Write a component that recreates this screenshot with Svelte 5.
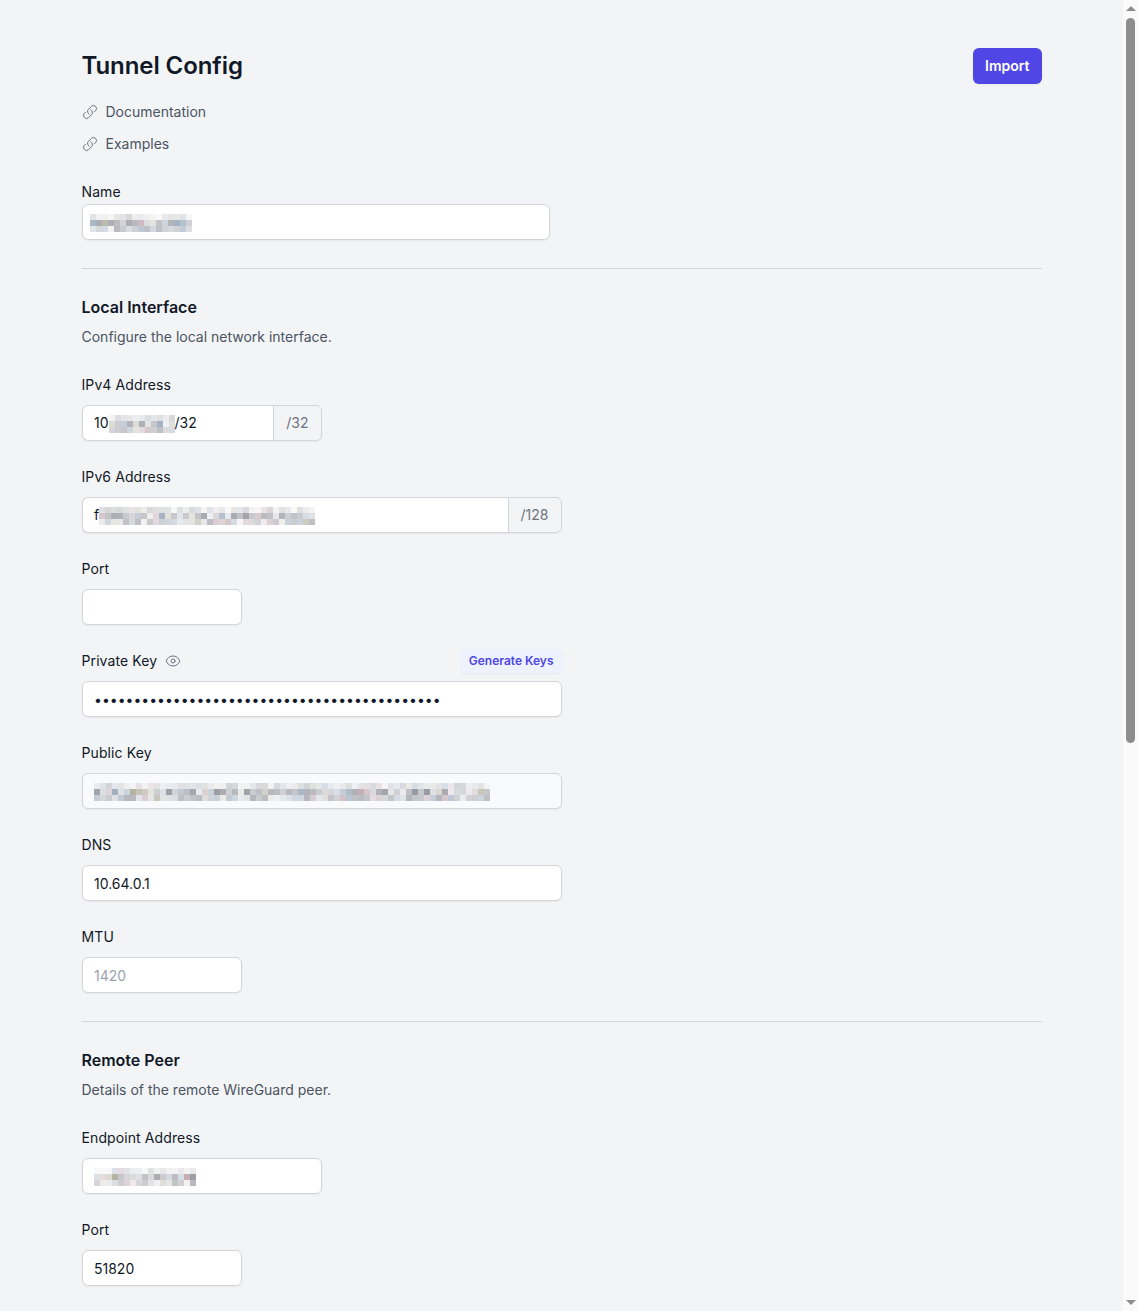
<script lang="ts">
  // redacted values in the reference are pixelated, so draw them as seeded tile grids
  function mosaic(cols: number, seed: number) {
    let s = seed;
    const next = () => {
      s = (s * 9301 + 49297) % 233280;
      return s / 233280;
    };
    const depth = [0.4, 1, 0.7];
    const cells: string[] = [];
    for (let row = 0; row < 3; row++) {
      for (let col = 0; col < cols; col++) {
        const a = (0.12 + next() * 0.58) * depth[row];
        const tint = next();
        const c = tint < 0.2 ? '120,140,165' : tint < 0.3 ? '165,130,140' : tint < 0.4 ? '150,145,120' : '110,112,122';
        cells.push(`rgba(${c},${a.toFixed(2)})`);
      }
    }
    return cells;
  }

  const linkPath =
    'M13.19 8.688a4.5 4.5 0 0 1 1.242 7.244l-4.5 4.5a4.5 4.5 0 0 1-6.364-6.364l1.757-1.757m13.35-.622 1.757-1.757a4.5 4.5 0 0 0-6.364-6.364l-4.5 4.5a4.5 4.5 0 0 0 1.242 7.244';
  const links = ['Documentation', 'Examples'];
  const privateKey = '•'.repeat(44);
</script>

{#snippet blur(cols: number, seed: number, cls = '')}
  <span class={`mosaic ${cls}`} style={`grid-template-columns: repeat(${cols}, 6px)`} aria-hidden="true">
    {#each mosaic(cols, seed) as color}
      <i style={`background: ${color}`}></i>
    {/each}
  </span>
{/snippet}

<div class="window">
  <main class="page">
    <header class="page__header">
      <h1>Tunnel Config</h1>
      <button class="btn-primary" type="button">Import</button>
    </header>

    <ul class="links">
      {#each links as link}
        <li>
          <svg viewBox="0 0 24 24" aria-hidden="true"><path d={linkPath} /></svg>
          <span>{link}</span>
        </li>
      {/each}
    </ul>

    <div class="field field--name">
      <label for="name">Name</label>
      <div id="name" class="input input--name">{@render blur(17, 11, 'mosaic--out')}</div>
    </div>

    <hr />

    <section>
      <h2>Local Interface</h2>
      <p class="hint">Configure the local network interface.</p>

      <div class="field">
        <span class="label">IPv4 Address</span>
        <div class="group group--sm">
          <div class="input">10{@render blur(11, 23)}/32</div>
          <span class="addon">/32</span>
        </div>
      </div>

      <div class="field">
        <span class="label">IPv6 Address</span>
        <div class="group group--lg">
          <div class="input">f{@render blur(36, 37)}</div>
          <span class="addon">/128</span>
        </div>
      </div>

      <div class="field">
        <label for="port">Port</label>
        <input id="port" class="input input--xs" />
      </div>

      <div class="field field--key">
        <div class="label-row">
          <span class="label">Private Key</span>
          <svg class="eye" viewBox="0 0 24 24" aria-hidden="true">
            <path d="M2.036 12.322a1.012 1.012 0 0 1 0-.639C3.423 7.51 7.36 4.5 12 4.5c4.638 0 8.573 3.007 9.963 7.178.07.207.07.431 0 .639C20.577 16.49 16.64 19.5 12 19.5c-4.638 0-8.573-3.007-9.963-7.178Z" />
            <path d="M15 12a3 3 0 1 1-6 0 3 3 0 0 1 6 0Z" />
          </svg>
          <button class="btn-soft" type="button">Generate Keys</button>
        </div>
        <input class="input input--lg" type="password" value={privateKey} />
      </div>

      <div class="field">
        <span class="label">Public Key</span>
        <div class="input input--lg input--readonly">{@render blur(66, 53)}</div>
      </div>

      <div class="field">
        <label for="dns">DNS</label>
        <input id="dns" class="input input--lg" value="10.64.0.1" />
      </div>

      <div class="field">
        <label for="mtu">MTU</label>
        <input id="mtu" class="input input--xs" placeholder="1420" />
      </div>
    </section>

    <hr />

    <section>
      <h2>Remote Peer</h2>
      <p class="hint">Details of the remote WireGuard peer.</p>

      <div class="field">
        <span class="label">Endpoint Address</span>
        <div class="input input--sm">{@render blur(17, 71)}</div>
      </div>

      <div class="field">
        <label for="peer-port">Port</label>
        <input id="peer-port" class="input input--xs" value="51820" />
      </div>
    </section>
  </main>

  <div class="scrollbar" aria-hidden="true">
    <span class="scrollbar__up"></span>
    <span class="scrollbar__thumb"></span>
    <span class="scrollbar__down"></span>
  </div>
</div>

<style>
  :global(body) {
    margin: 0;
    overflow: hidden;
    background: #f3f4f6;
    color: #111827;
    font-family: Inter, 'Liberation Sans', sans-serif;
  }

  .window {
    display: flex;
    height: 1311px;
    overflow: hidden;
  }

  .page {
    box-sizing: border-box;
    flex: 1;
    min-width: 0;
    max-width: 1024px;
    margin: 0 auto;
    padding: 48px 32px 0;
  }

  .page__header {
    display: flex;
    align-items: center;
    justify-content: space-between;
  }

  h1 {
    margin: 0;
    font-size: 24px;
    line-height: 32px;
    font-weight: 600;
    letter-spacing: -.08px;
  }

  h2 {
    margin: 0;
    font-size: 16px;
    line-height: 24px;
    font-weight: 600;
  }

  .btn-primary {
    height: 36px;
    padding: 0 12px;
    border: 0;
    border-radius: 6px;
    background: #4f46e5;
    box-shadow: 0 1px 2px rgb(0 0 0 / .05);
    color: #fff;
    font: 600 14px/20px Inter, sans-serif;
  }

  .links {
    display: grid;
    gap: 12px;
    margin: 18px 0 0;
    padding: 0;
    list-style: none;
  }

  .links li {
    display: flex;
    align-items: center;
    gap: 8px;
    height: 20px;
    color: #4b5563;
    font-size: 14px;
    line-height: 20px;
  }

  .links svg {
    width: 16px;
    height: 16px;
  }

  svg {
    fill: none;
    stroke: #6b7280;
    stroke-width: 1.5;
    stroke-linecap: round;
    stroke-linejoin: round;
  }

  hr {
    height: 1px;
    margin: 28px 0 26px;
    border: 0;
    background: #d1d5db;
  }

  .hint {
    margin: 8px 0 0;
    color: #4b5563;
    font-size: 14px;
    line-height: 20px;
  }

  .field {
    display: flex;
    flex-direction: column;
    margin-top: 26px;
  }

  .hint + .field {
    margin-top: 28px;
  }

  .field label,
  .label {
    display: block;
    margin-bottom: 10px;
    font-size: 14px;
    line-height: 20px;
    font-weight: 400;
    letter-spacing: .1px;
  }

  .field--name {
    margin-top: 28px;
  }

  .field--name label {
    margin-bottom: 2px;
  }

  .field--key {
    margin-top: 24px;
  }

  .label-row {
    display: flex;
    align-items: center;
    height: 24px;
    width: 480px;
    margin-bottom: 8px;
    gap: 8px;
  }

  .label-row .label {
    margin: 0;
  }

  .eye {
    width: 16px;
    height: 16px;
  }

  .btn-soft {
    height: 24px;
    margin-left: auto;
    padding: 0 8px;
    border: 0;
    border-radius: 4px;
    background: #eef2ff;
    box-shadow: 0 1px 2px rgb(0 0 0 / .05);
    color: #4f46e5;
    font: 600 12px/16px Inter, sans-serif;
  }

  .input {
    display: flex;
    align-items: center;
    box-sizing: border-box;
    height: 36px;
    padding: 0 11.5px;
    border: 1px solid #d1d5db;
    border-radius: 6px;
    outline: 0;
    background: #fff;
    box-shadow: 0 1px 2px rgb(0 0 0 / .05);
    color: #111827;
    font: 400 14px/20px Inter, sans-serif;
  }

  .input::placeholder {
    color: #9ca3af;
  }

  .input--name {
    width: 468px;
  }

  .input--xs {
    width: 160px;
  }

  .input--sm {
    width: 240px;
  }

  .input--lg {
    width: 480px;
  }

  .input--readonly {
    background: #f9fafb;
  }

  .group {
    display: flex;
    height: 36px;
    border-radius: 6px;
    box-shadow: 0 1px 2px rgb(0 0 0 / .05);
  }

  .group--sm {
    width: 240px;
  }

  .group--lg {
    width: 480px;
  }

  .group .input {
    flex: 1;
    min-width: 0;
    border-right: 0;
    border-radius: 6px 0 0 6px;
    box-shadow: none;
  }

  .addon {
    display: flex;
    align-items: center;
    padding: 0 12px;
    border: 1px solid #d1d5db;
    border-radius: 0 6px 6px 0;
    color: #6b7280;
    font-size: 14px;
    line-height: 20px;
  }

  .mosaic {
    display: grid;
    grid-auto-rows: 6px;
    flex: none;
    margin-top: 2px;
  }

  .mosaic--out {
    margin-left: -4px;
  }

  .scrollbar {
    position: relative;
    flex: none;
    width: 15px;
    background: #fafafa;
  }

  .scrollbar__up,
  .scrollbar__down {
    position: absolute;
    left: 3px;
    width: 0;
    height: 0;
    border-left: 5px solid transparent;
    border-right: 5px solid transparent;
  }

  .scrollbar__up {
    top: 6px;
    border-bottom: 5px solid #8d8d8d;
  }

  .scrollbar__down {
    bottom: 6px;
    border-top: 5px solid #8d8d8d;
  }

  .scrollbar__thumb {
    position: absolute;
    top: 18px;
    left: 3px;
    width: 9px;
    height: 725px;
    border-radius: 5px;
    background: #8d8d8d;
  }
</style>
